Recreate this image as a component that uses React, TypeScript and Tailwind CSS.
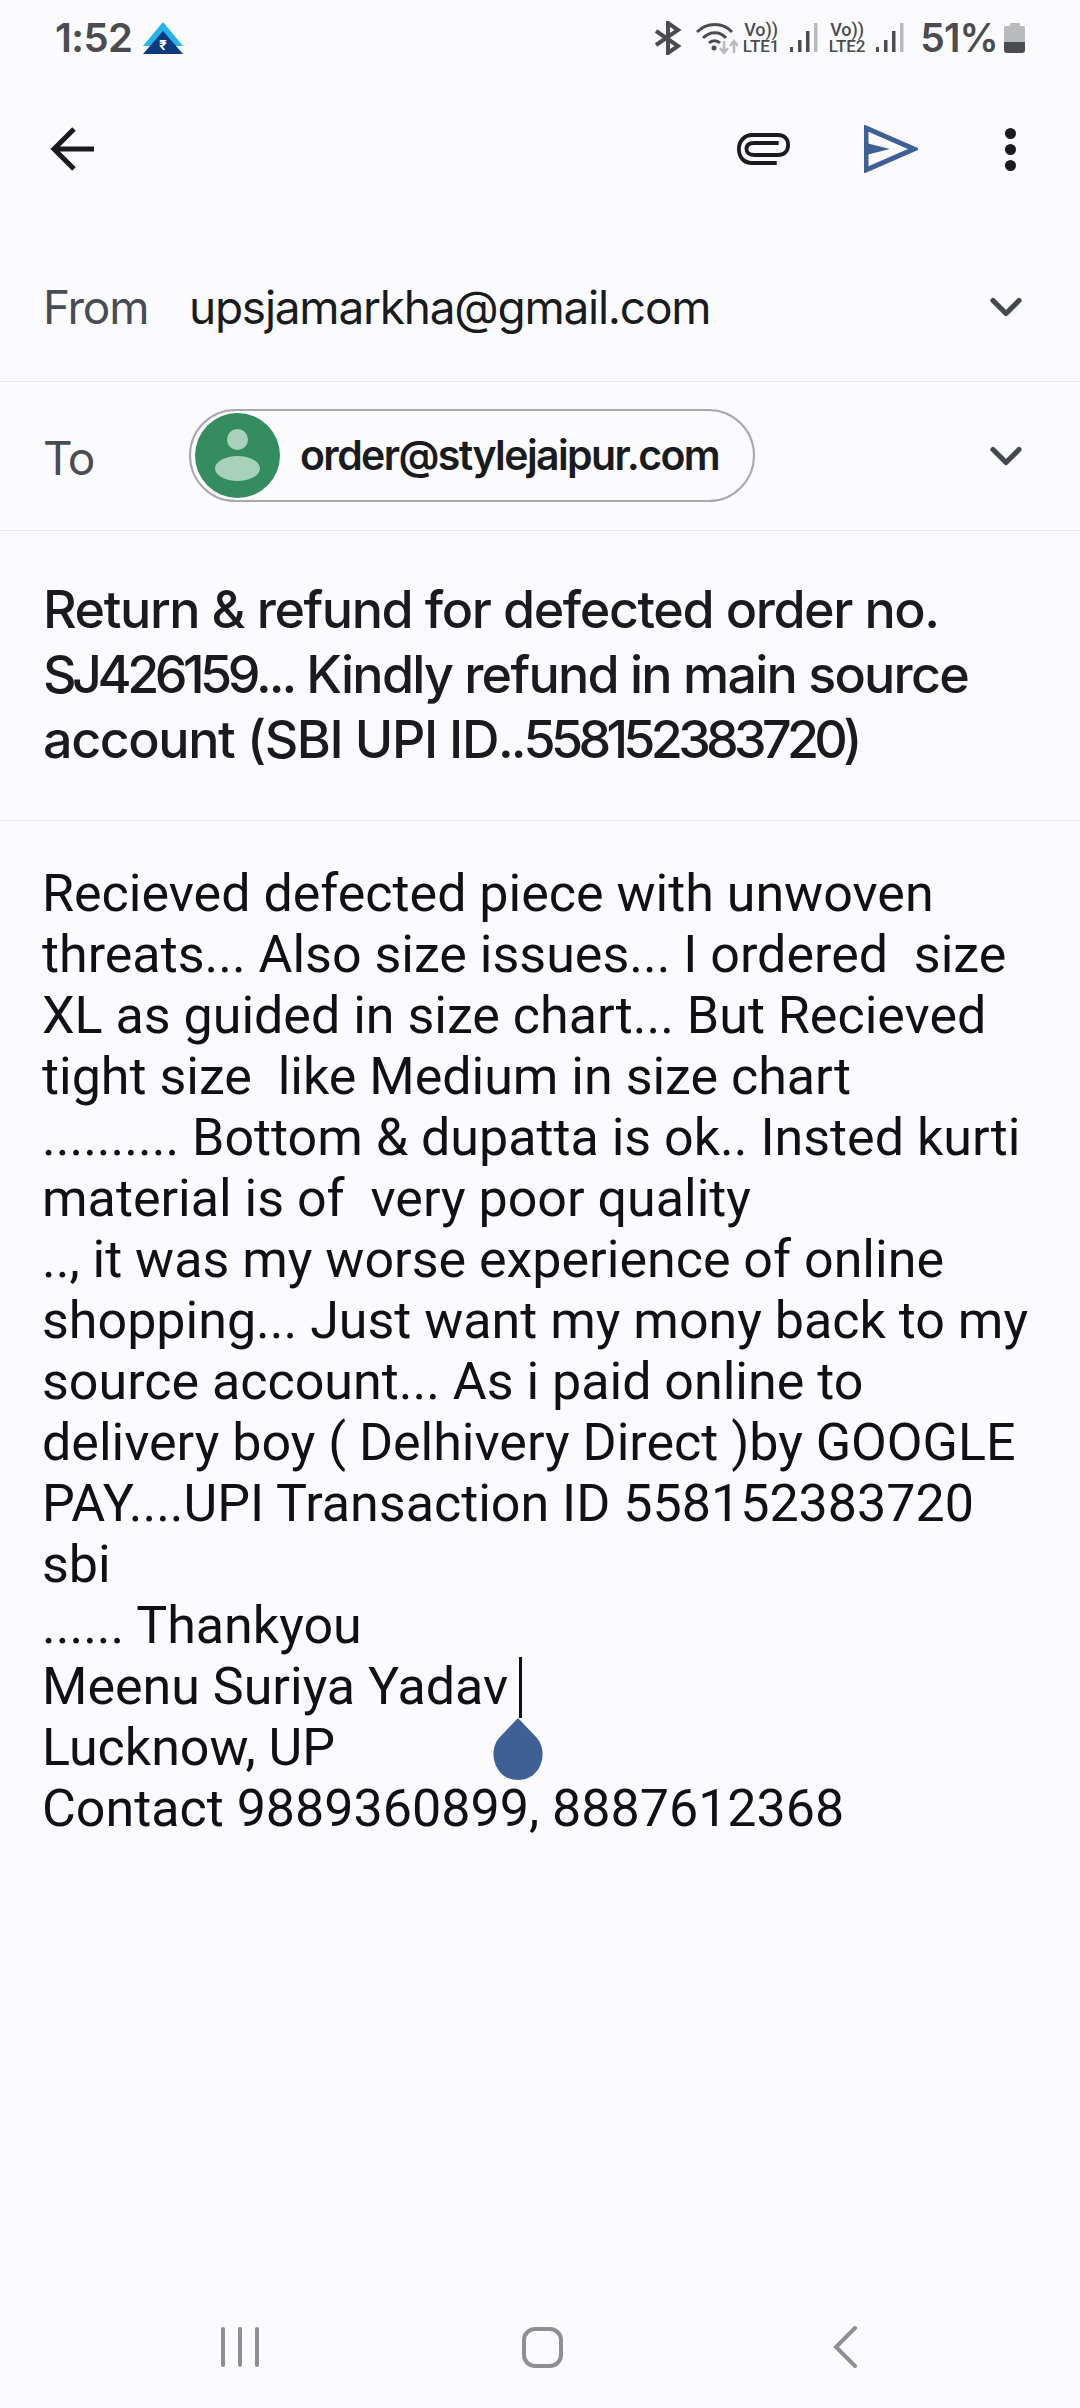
import type { ReactNode } from "react";
import { ChevronDown } from "lucide-react";

const BODY_LINES = [
  "Recieved defected piece with unwoven",
  "threats... Also size issues... I ordered  size",
  "XL as guided in size chart... But Recieved",
  "tight size  like Medium in size chart",
  ".......... Bottom & dupatta is ok.. Insted kurti",
  "material is of  very poor quality",
  ".., it was my worse experience of online",
  "shopping... Just want my mony back to my",
  "source account... As i paid online to",
  "delivery boy ( Delhivery Direct )by GOOGLE",
  "PAY....UPI Transaction ID 558152383720",
  "sbi",
  "...... Thankyou",
];

function SignalBars() {
  return (
    <svg width="28" height="30" viewBox="0 0 28 30">
      <rect x="0" y="24" width="3" height="5" fill="#4a4c50" />
      <rect x="8" y="17" width="3.5" height="12" fill="#4a4c50" />
      <rect x="16" y="8" width="3.5" height="21" fill="#4a4c50" />
      <rect x="24" y="0" width="3.5" height="29" fill="#b9babc" />
    </svg>
  );
}

function SimBadge({ sim }: { sim: string }) {
  return (
    <div className="flex w-[40px] flex-col items-center font-medium text-[#4a4c50]">
      <span className="text-[18px] leading-[16px]">Vo))</span>
      <span className="text-[17px] leading-[16px]">{sim}</span>
    </div>
  );
}

function StatusBar() {
  return (
    <div className="flex h-[74px] shrink-0 items-center justify-between pl-[55px] pr-[55px] pt-[1px] text-[#4a4c50]">
      <div className="flex items-center gap-[11px]">
        <span className="font-['Inter'] text-[40px] leading-none font-semibold tracking-[-0.015em]">1:52</span>
        <svg width="40" height="32" viewBox="0 0 40 32">
          <path d="M20 0 L40 24 L0 24 Z" fill="#25b4e8" />
          <path d="M20 9 L40 32 L0 32 Z" fill="#0a3a80" />
          <text x="20" y="28" textAnchor="middle" fontSize="14" fill="#fff" fontWeight="700">
            ₹
          </text>
        </svg>
      </div>
      <div className="flex items-center">
        <svg width="28" height="34" viewBox="0 0 28 34" fill="none" stroke="#4a4c50" strokeWidth="4">
          <path d="M2 10 L24 25 L14 32 L14 2 L24 9 L2 24" />
        </svg>
        <svg className="ml-[14px]" width="42" height="32" viewBox="0 0 42 32" fill="none">
          <path d="M1 10 C11 0 27 0 36 10" stroke="#4a4c50" strokeWidth="3" />
          <path d="M7 16 C14 9 24 9 30 16" stroke="#4a4c50" strokeWidth="3" />
          <path d="M13 21 C16 18 21 18 24 21" stroke="#4a4c50" strokeWidth="3" />
          <circle cx="18" cy="26" r="2.5" fill="#4a4c50" />
          <path d="M28 19 V30 M24 26 L28 31 L32 26" stroke="#b9babc" strokeWidth="2.5" />
          <path d="M38 31 V19 M34 24 L38 19 L42 24" stroke="#b9babc" strokeWidth="2.5" />
        </svg>
        <div className="ml-[3px]">
          <SimBadge sim="LTE1" />
        </div>
        <div className="ml-[9px]">
          <SignalBars />
        </div>
        <div className="ml-[9px]">
          <SimBadge sim="LTE2" />
        </div>
        <div className="ml-[9px]">
          <SignalBars />
        </div>
        <span className="ml-[16px] font-['Inter'] text-[39px] leading-none font-semibold tracking-[-0.02em]">51%</span>
        <div className="ml-[6px] flex h-[30px] w-[21px] flex-col">
          <div className="mx-auto h-[3px] w-[10px] rounded-t-[1px] bg-[#b9babc]" />
          <div className="h-[16px] rounded-t-[2px] bg-[#b9babc]" />
          <div className="h-[11px] rounded-b-[3px] bg-[#4a4c50]" />
        </div>
      </div>
    </div>
  );
}

function Toolbar() {
  return (
    <div className="flex h-[150px] shrink-0 items-center pl-[50px] pr-[64px]">
      <svg width="46" height="44" viewBox="0 0 46 44" fill="none" stroke="#1a1b1f" strokeWidth="5">
        <path d="M44 22 H5 M24 2 L4 22 L24 42" />
      </svg>
      <div className="ml-auto flex items-center">
        <svg width="53" height="32" viewBox="0 0 56 32" fill="none" stroke="#1a1b1f" strokeWidth="4" preserveAspectRatio="none">
          <path d="M42 30 H16 C7 30 2 24 2 16 C2 8 8 2 16 2 H43 C50 2 54 6 54 12 C54 18 50 22 43 22 H18 C12 22 10 19 10 16 C10 12 13 10 18 10 H44" />
        </svg>
        <svg className="ml-[74px]" width="54" height="48" viewBox="0 0 54 48" fill="none">
          <path d="M2 3 L50 24 L2 45 Z" stroke="#3f6095" strokeWidth="5" />
          <path d="M2 18 L26 24 L2 30 Z" fill="#3f6095" />
        </svg>
        <div className="ml-[87px] flex flex-col gap-[5px]">
          <div className="h-[11px] w-[11px] rounded-full bg-[#1a1b1f]" />
          <div className="h-[11px] w-[11px] rounded-full bg-[#1a1b1f]" />
          <div className="h-[11px] w-[11px] rounded-full bg-[#1a1b1f]" />
        </div>
      </div>
    </div>
  );
}

function AddressRow({ label, labelClass, children }: { label: string; labelClass?: string; children: ReactNode }) {
  return (
    <div className="flex h-[149px] shrink-0 items-center border-b border-[#e8e8ea] pl-[43px] pr-[48px]">
      <span className={`w-[146px] font-['Inter'] text-[46px] leading-none tracking-[-1.25px] text-[#4a4c55] ${labelClass ?? ""}`}>
        {label}
      </span>
      {children}
      <ChevronDown className="ml-auto text-[#43474e]" size={52} strokeWidth={2.4} />
    </div>
  );
}

export default function App() {
  return (
    <div className="flex h-[2408px] w-[1080px] flex-col overflow-hidden bg-[#fbfbfe] font-['Roboto',sans-serif]">
      <StatusBar />
      <Toolbar />
      <div className="h-[9px] shrink-0" />
      <AddressRow label="From">
        <span className="font-['Inter'] text-[46px] leading-none tracking-[-1.25px] text-[#1a1b1f]">upsjamarkha@gmail.com</span>
      </AddressRow>
      <AddressRow label="To" labelClass="pt-[4px]">
        <div className="mb-[2px] flex h-[93px] w-[566px] items-center rounded-full border-2 border-[#a9a9ad] pl-[4px]">
          <div className="flex h-[85px] w-[85px] items-center justify-center rounded-full bg-[#358c5f]">
            <svg width="45" height="52" viewBox="0 0 45 52" fill="#a7d1ba">
              <ellipse cx="22.5" cy="10.5" rx="10.5" ry="10.5" />
              <ellipse cx="22.5" cy="39.5" rx="22.5" ry="12.5" />
            </svg>
          </div>
          <span className="ml-[20px] font-['Inter'] text-[41px] leading-none font-semibold tracking-[-1.6px] text-[#1a1b1f]">order@stylejaipur.com</span>
        </div>
      </AddressRow>
      <div className="shrink-0 border-b border-[#e8e8ea] pl-[43px] pr-[40px] pt-[46px] pb-[48px] font-['Inter'] text-[52px] leading-[65px] font-medium tracking-[-1.4px] text-[#1a1b1f]">
        <div>Return &amp; refund for defected order no.</div>
        <div className="tracking-[-1.75px]">
          <span className="tracking-[-4.5px]">SJ426159</span>
          <span className="tracking-[-3px]">...</span> Kindly refund in main source
        </div>
        <div>
          account (SBI UPI ID<span className="tracking-[-3px]">..</span>
          <span className="tracking-[-4.7px]">558152383720</span>)
        </div>
      </div>
      <div className="shrink-0 whitespace-pre pl-[42px] pt-[42px] text-[52px] leading-[61px] text-[#111114]">
        {BODY_LINES.map((line) => (
          <div key={line}>{line}</div>
        ))}
        <div>
          Meenu Suriya Yadav{" "}
          <span className="relative -ml-[2px] inline-block h-0 w-0">
            <span className="absolute bottom-[-14px] left-0 h-[61px] w-[3px] bg-[#111114]" />
            <svg className="absolute top-[14px] left-[-28px]" width="54" height="62" viewBox="0 0 54 62">
              <path d="M27 0 L46 20 C58 34 50 62 27 62 C4 62 -4 34 8 20 Z" fill="#3f6095" />
            </svg>
          </span>
        </div>
        <div>Lucknow, UP</div>
        <div>Contact 9889360899, 8887612368</div>
      </div>
      <div className="mt-auto mb-[40px] flex h-[42px] items-center pl-[221px]">
        <div className="flex gap-[13px]">
          <div className="h-[40px] w-[4px] rounded-full bg-[#8e8f91]" />
          <div className="h-[40px] w-[4px] rounded-full bg-[#8e8f91]" />
          <div className="h-[40px] w-[4px] rounded-full bg-[#8e8f91]" />
        </div>
        <div className="ml-[263px] h-[41px] w-[41px] rounded-[13px] border-[4px] border-[#8e8f91]" />
        <svg className="ml-[270px]" width="24" height="42" viewBox="0 0 24 42" fill="none" stroke="#8e8f91" strokeWidth="4" strokeLinecap="round">
          <path d="M22 2 L3 21 L22 40" />
        </svg>
      </div>
    </div>
  );
}
